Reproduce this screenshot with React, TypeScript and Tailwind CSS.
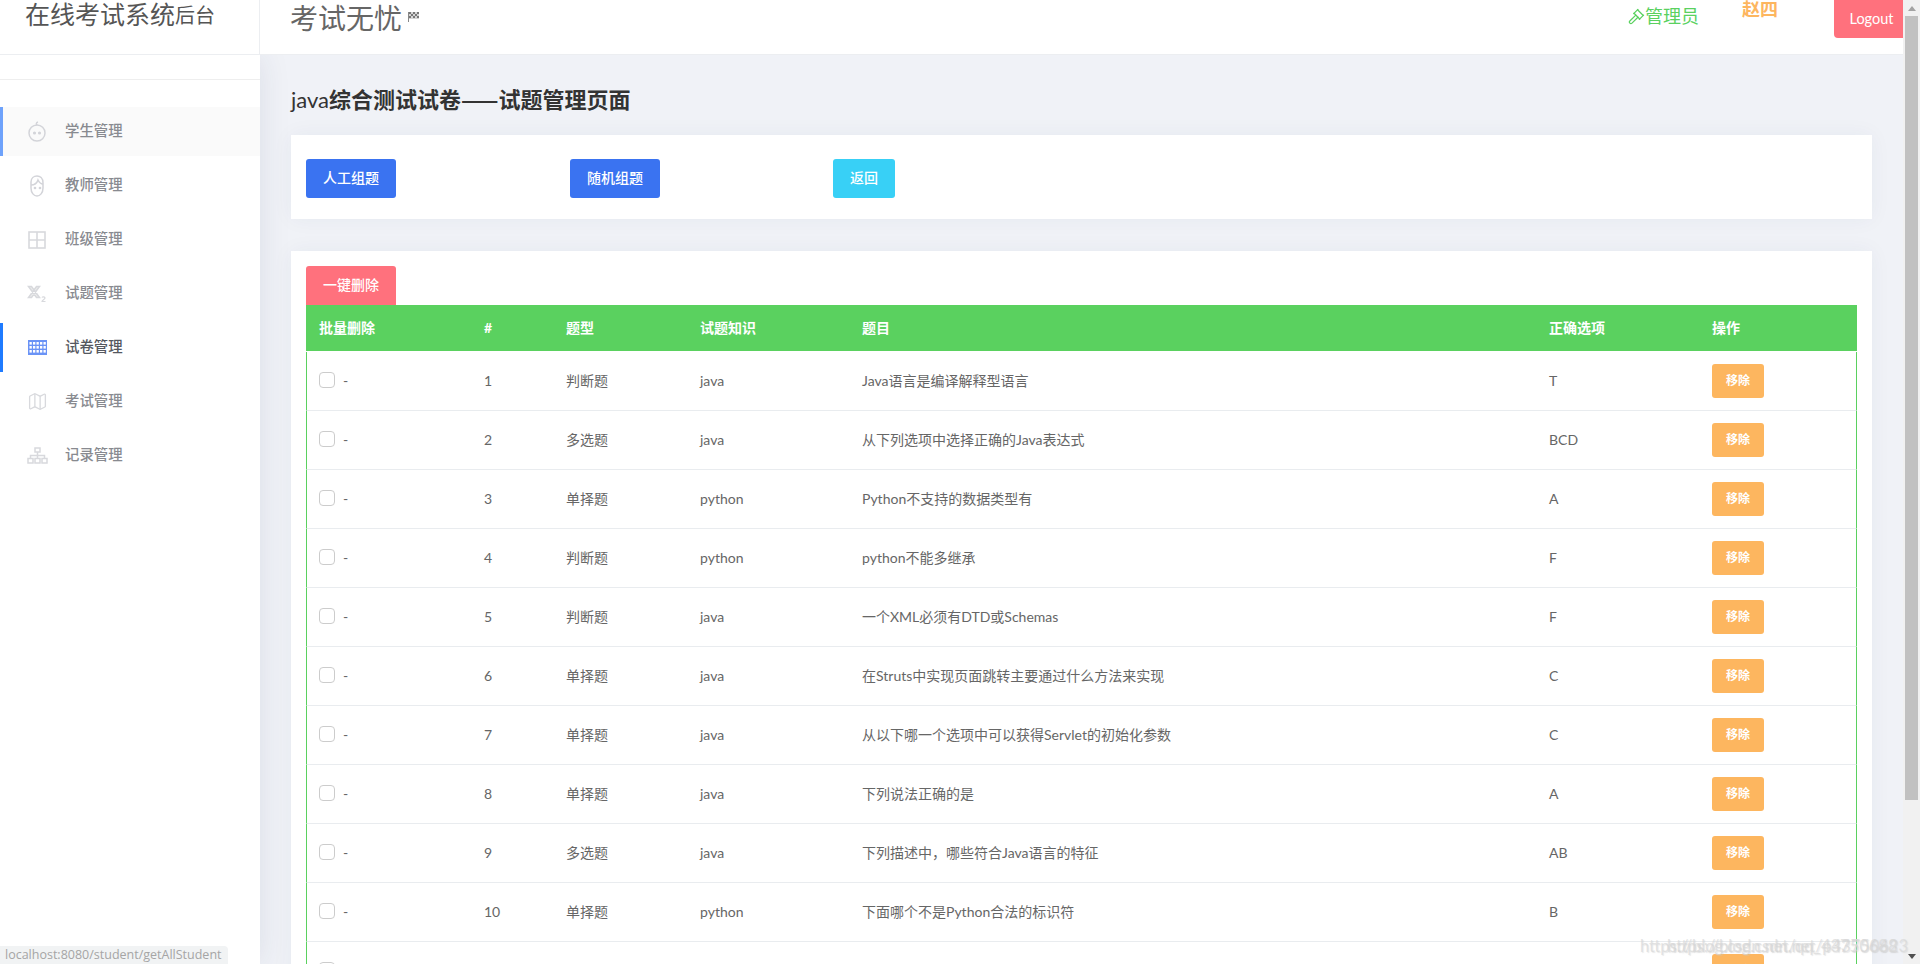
import { Gavel, Map as MapIcon } from "lucide-react";

const rows = [
  ["1", "判断题", "java", "Java语言是编译解释型语言", "T"],
  ["2", "多选题", "java", "从下列选项中选择正确的Java表达式", "BCD"],
  ["3", "单择题", "python", "Python不支持的数据类型有", "A"],
  ["4", "判断题", "python", "python不能多继承", "F"],
  ["5", "判断题", "java", "一个XML必须有DTD或Schemas", "F"],
  ["6", "单择题", "java", "在Struts中实现页面跳转主要通过什么方法来实现", "C"],
  ["7", "单择题", "java", "从以下哪一个选项中可以获得Servlet的初始化参数", "C"],
  ["8", "单择题", "java", "下列说法正确的是", "A"],
  ["9", "多选题", "java", "下列描述中，哪些符合Java语言的特征", "AB"],
  ["10", "单择题", "python", "下面哪个不是Python合法的标识符", "B"],
  ["", "", "", "", ""],
];

function Baby() {
  return (
    <svg width="20" height="22" viewBox="0 0 20 22" fill="none" stroke="#d3d4d9" strokeWidth="1.5">
      <circle cx="10" cy="12" r="8" />
      <path d="M10 4c-1-1-1-2.500 1-3" />
      <circle cx="7.500" cy="12" r=".8" fill="#d3d4d9" />
      <circle cx="12.500" cy="12" r=".8" fill="#d3d4d9" />
    </svg>
  );
}
function Teacher() {
  return (
    <svg width="18" height="22" viewBox="0 0 18 22" fill="none" stroke="#d3d4d9" strokeWidth="1.5">
      <path d="M3 7c0-4 3-6 6-6s6 2 6 7v5c0 5-3 8-6 8s-6-3-6-8z" />
      <path d="M3 10c3 0 6-2 7-5 1 2 3 4 5 4" />
      <circle cx="7" cy="13" r=".6" fill="#d3d4d9" />
      <circle cx="12" cy="13" r=".6" fill="#d3d4d9" />
    </svg>
  );
}
function Grid2() {
  return (
    <svg width="18" height="18" viewBox="0 0 18 18" fill="none" stroke="#d8d9dd" strokeWidth="1.6">
      <rect x="1" y="1" width="16" height="16" />
      <path d="M9 1v16M1 9h16" />
    </svg>
  );
}
function SubX() {
  return (
    <svg width="20" height="18" viewBox="0 0 20 18" fill="none" stroke="#d8d9dd">
      <path d="M1.500 1.500h3l8 11h-3zM12.500 1.500h-3l-8 11h3z" strokeWidth="1.500" fill="#eceded" />
      <path d="M15 12.500c.5-1 3-1 3 .5 0 1.500-3 2-3 3.500h3.500" strokeWidth="1.200" />
    </svg>
  );
}
function TableIcon() {
  return (
    <svg width="19" height="15" viewBox="0 0 19 15">
      <rect width="19" height="15" fill="#6a93f6" />
      <path d="M1 1h17v13H1z" fill="#6a93f6" />
      <g fill="#fff">
        {[1.500, 5, 8.500, 12, 15.500].flatMap((x) =>
          [2, 6, 10].map((y) => <rect key={`${x}-${y}`} x={x} y={y} width="2.300" height="2.600" />)
        )}
      </g>
    </svg>
  );
}
function Sitemap() {
  return (
    <svg width="21" height="17" viewBox="0 0 21 17" fill="none" stroke="#d8d9dd" strokeWidth="1.500">
      <rect x="8" y="1" width="5" height="4" />
      <rect x="1" y="11.500" width="5" height="4.500" />
      <rect x="8" y="11.500" width="5" height="4.500" />
      <rect x="15" y="11.500" width="5" height="4.500" />
      <path d="M10.500 5v6.500M3.500 11.500V8.500h14v3" />
    </svg>
  );
}
function Flag() {
  return (
    <svg width="11" height="10" viewBox="0 0 11 10" className="ml-[6px] mt-[12px]">
      <path d="M.5 0v10" stroke="#888" strokeWidth="1" />
      <rect x="1" y="0" width="10" height="7" fill="#d5d5d5" />
      <path d="M1 0h2v2H1zM5 0h2v2H5zM9 0h2v2H9zM3 2h2v2H3zM7 2h2v2H7zM1 4h2v2H1zM5 4h2v2H5zM9 4h2v2H9z" fill="#777" />
    </svg>
  );
}

const nav = [
  { label: "学生管理", icon: <Baby /> },
  { label: "教师管理", icon: <Teacher /> },
  { label: "班级管理", icon: <Grid2 /> },
  { label: "试题管理", icon: <SubX /> },
  { label: "试卷管理", icon: <TableIcon /> },
  { label: "考试管理", icon: <MapIcon size={21} color="#d8d9dd" strokeWidth={1.5} /> },
  { label: "记录管理", icon: <Sitemap /> },
];

function App() {
  return (
    <div className="relative flex h-[964px] w-[1920px] overflow-hidden bg-white font-[family-name:Lato,'Noto_Sans_CJK_SC',sans-serif] text-[14px] text-[#666]">
      <div className="flex w-[1903px] shrink-0 flex-col">
        <header className="relative z-20 flex h-[55px] shrink-0 border-b border-[#eceef1] bg-white">
          <div className="flex h-full w-[260px] shrink-0 items-start border-r border-[#eceef1] pl-[25px] text-[#555]">
            <span className="text-[25px] leading-[28px]">在线考试系统</span>
            <span className="text-[20px] leading-[30px]">后台</span>
          </div>
          <div className="ml-[30px] flex items-start text-[#666]">
            <span className="text-[28px] leading-[36px]">考试无忧</span>
            <Flag />
          </div>
          <div className="ml-auto flex items-start">
            <div className="flex items-center pt-[4px] text-[18px] leading-[24px] text-[#5ad15f]">
              <Gavel size={17} strokeWidth={1.75} />
              <span>管理员</span>
            </div>
            <span className="ml-[43px] text-[18px] font-bold leading-[18px] text-[#fdb65f]">赵四</span>
            <button className="ml-[56px] h-[38px] w-[69px] rounded-bl-[4px] bg-[#ff717d] pl-[6px] text-[14.5px] text-white">Logout</button>
          </div>
        </header>

        <div className="flex min-h-0 flex-1">
          <aside className="relative z-10 w-[260px] shrink-0 bg-white shadow-[0_0_30px_rgba(40,50,90,0.1)]">
            <div className="h-[25px] border-b border-[#eeeeee]" />
            <nav className="pt-[27px]">
              {nav.map((item, i) => (
                <div
                  key={item.label}
                  className={
                    i === 0
                      ? "mb-[5px] flex h-[49px] items-center border-l-[3px] border-[#6ea2fb] bg-[#fafafa]"
                      : i === 4
                        ? "mb-[5px] flex h-[49px] items-center border-l-[3px] border-[#1f7bff]"
                        : "mb-[5px] flex h-[49px] items-center border-l-[3px] border-transparent"
                  }
                >
                  <span className="flex w-[62px] shrink-0 justify-center pl-[6px]">{item.icon}</span>
                  <span className={i === 4 ? "pb-[2px] text-[14.4px] font-medium text-[#55585f]" : "pb-[2px] text-[14.4px] font-medium text-[#888a90]"}>{item.label}</span>
                </div>
              ))}
            </nav>
          </aside>

          <main className="min-w-0 flex-1 bg-[#f0f2f7] px-[31px] pt-[28px]">
            <h1 className="mb-[22px] h-[30px] text-[22px] leading-[30px] font-bold text-[#333]">
              <span className="font-normal">java</span>综合测试试卷<span className="font-[family-name:'Noto_Sans_CJK_SC',sans-serif]">——</span>试题管理页面
            </h1>
            <section className="mb-[32px] flex h-[84px] bg-white pl-[15px] pt-[24px] shadow-[0_0_20px_rgba(40,50,90,0.05)]">
              <button className="h-[39px] w-[90px] rounded-[3px] bg-[#3a73f1] pb-[2px] font-medium text-white">人工组题</button>
              <button className="ml-[174px] h-[39px] w-[90px] rounded-[3px] bg-[#3a73f1] pb-[2px] font-medium text-white">随机组题</button>
              <button className="ml-[173px] h-[39px] w-[62px] rounded-[3px] bg-[#38d0f6] pb-[2px] font-medium text-white">返回</button>
            </section>
            <section className="bg-white px-[15px] pt-[15px] shadow-[0_0_20px_rgba(40,50,90,0.05)]">
              <button className="block h-[39px] w-[90px] rounded-t-[3px] bg-[#ff717d] pb-[2px] font-medium text-white">一键删除</button>
              <table className="w-[1551px] table-fixed border-separate border-spacing-0 text-left">
                <thead>
                  <tr className="h-[47px] text-white">
                    <th className="w-[165px] border-b border-b-white bg-[#5ad15f] pb-[2px] pl-[13px] font-bold">批量删除</th>
                    <th className="w-[82px] border-b border-b-white bg-[#5ad15f] pb-[2px] pl-[13px] font-bold">#</th>
                    <th className="w-[134px] border-b border-b-white bg-[#5ad15f] pb-[2px] pl-[13px] font-bold">题型</th>
                    <th className="w-[162px] border-b border-b-white bg-[#5ad15f] pb-[2px] pl-[13px] font-bold">试题知识</th>
                    <th className="w-[687px] border-b border-b-white bg-[#5ad15f] pb-[2px] pl-[13px] font-bold">题目</th>
                    <th className="w-[163px] border-b border-b-white bg-[#5ad15f] pb-[2px] pl-[13px] font-bold">正确选项</th>
                    <th className="w-[158px] border-b border-b-white bg-[#5ad15f] pb-[2px] pl-[13px] font-bold">操作</th>
                  </tr>
                </thead>
                <tbody>
                  {rows.map((r, i) => (
                    <tr key={i} className="h-[59px]">
                      <td className="border-b border-l border-b-[#e9ecef] border-l-[#5ad15f] pb-[2px] pl-[12px]">
                        <div className="flex items-center">
                          <span className="h-[16px] w-[16px] rounded-[4px] border border-[#ccc] bg-white" />
                          <span className="ml-[8px]">-</span>
                        </div>
                      </td>
                      <td className="border-b border-b-[#e9ecef] pb-[2px] pl-[13px]">{r[0]}</td>
                      <td className="border-b border-b-[#e9ecef] pb-[2px] pl-[13px]">{r[1]}</td>
                      <td className="border-b border-b-[#e9ecef] pb-[2px] pl-[13px]">{r[2]}</td>
                      <td className="border-b border-b-[#e9ecef] pb-[2px] pl-[13px]">{r[3]}</td>
                      <td className="border-b border-b-[#e9ecef] pb-[2px] pl-[13px]">{r[4]}</td>
                      <td className="border-b border-r border-b-[#e9ecef] border-r-[#5ad15f] pl-[13px]">
                        <button className="block h-[34px] w-[52px] rounded-[3px] bg-[#fdb65f] text-[12px] font-semibold text-white">移除</button>
                      </td>
                    </tr>
                  ))}
                </tbody>
              </table>
            </section>
          </main>
        </div>
      </div>

      <div className="relative flex w-[17px] shrink-0 flex-col items-center bg-[#f1f1f1]">
        <div className="flex h-[16px] items-center justify-center">
          <span className="h-0 w-0 border-x-[4px] border-b-[5px] border-x-transparent border-b-[#a3a3a3]" />
        </div>
        <div className="h-[784px] w-[13px] bg-[#c1c1c1]" />
        <div className="mt-auto flex h-[16px] items-center justify-center">
          <span className="h-0 w-0 border-x-[4px] border-t-[5px] border-x-transparent border-t-[#505050]" />
        </div>
      </div>

      <div className="absolute bottom-0 left-0 z-30 flex h-[18px] w-[228px] items-center rounded-tr-[4px] bg-[#f1f3f4] pl-[5px] font-[family-name:'Open_Sans',sans-serif] text-[12.5px] whitespace-nowrap text-[#a5a5a5]">
        localhost:8080/student/getAllStudent
      </div>
      <div className="pointer-events-none absolute top-[936px] left-[1640px] z-30 text-[16.5px] leading-[20px] whitespace-nowrap text-[#d8d8d8]/70 [text-shadow:1px_1px_1px_rgba(200,200,200,0.4)]">
        https://blog.csdn.net/qq_43750688
      </div>
      <div className="pointer-events-none absolute top-[936px] left-[1667px] z-30 text-[16.5px] leading-[20px] whitespace-nowrap text-[#d8d8d8]/70 [text-shadow:1px_1px_1px_rgba(200,200,200,0.4)]">
        https://blog.csdn.net/p43750623
      </div>
    </div>
  );
}

export default App;
